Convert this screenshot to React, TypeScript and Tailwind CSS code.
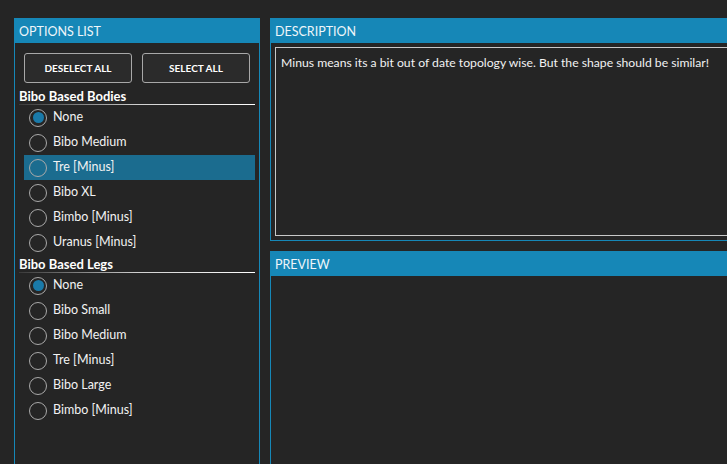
const font = { fontFamily: 'Lato, "Noto Sans", sans-serif' };

const bodies = ["None", "Bibo Medium", "Tre [Minus]", "Bibo XL", "Bimbo [Minus]", "Uranus [Minus]"];
const legs = ["None", "Bibo Small", "Bibo Medium", "Tre [Minus]", "Bibo Large", "Bimbo [Minus]"];

function Radio({ label, checked, highlight }: { label: string; checked?: boolean; highlight?: boolean }) {
    return (
        <div className={`flex items-center h-[25px] ml-[5px] pl-[5px] gap-[6px] ${highlight ? "bg-[#1b6c8f]" : ""}`}>
            <div className="w-[18px] h-[18px] rounded-full border-[1.5px] border-[#a9a9a9] flex items-center justify-center">
                {checked && <div className="w-[11px] h-[11px] rounded-full bg-[#1a7aa9]"></div>}
            </div>
            <span className="text-[12.5px] text-[#f2f2f2] leading-none">{label}</span>
        </div>
    );
}

function GroupHeader({ title }: { title: string }) {
    return (
        <div className="mr-[4px]">
            <div className="h-[17px] text-[13px] font-bold text-white leading-[18px]">{title}</div>
            <div className="h-px bg-gradient-to-r from-[#3a3a3a] via-[#cfcfcf] to-white"></div>
        </div>
    );
}

function PanelHeader({ title }: { title: string }) {
    return (
        <div className="h-[25px] shrink-0 bg-[#1687b7] flex items-center px-[4px] pt-[3px] text-[12.5px] text-[#eef6fa] leading-none">
            {title}
        </div>
    );
}

export default function App() {
    return (
        <div className="w-[727px] h-[464px] overflow-hidden bg-[#252525] flex gap-[10px] pt-[18px] pl-[14px]" style={font}>
            {/* Options list */}
            <div className="w-[246px] h-[470px] shrink-0 flex flex-col border border-t-0 border-[#1687b7]">
                <PanelHeader title="OPTIONS LIST" />
                <div className="pl-[4px] pt-[10px]">
                    <div className="flex gap-[10px] pl-[5px]">
                        <button className="w-[108px] h-[30px] rounded-[3px] border border-[#a8a8a8] bg-[#2b2b2b] text-[10px] font-bold text-white">
                            DESELECT ALL
                        </button>
                        <button className="w-[108px] h-[30px] rounded-[3px] border border-[#a8a8a8] bg-[#2b2b2b] text-[10px] font-bold text-white">
                            SELECT ALL
                        </button>
                    </div>
                    <div className="mt-[4px]">
                        <GroupHeader title="Bibo Based Bodies" />
                        <div className="mr-[4px]">
                            {bodies.map((b, i) => (
                                <Radio key={b} label={b} checked={i === 0} highlight={i === 2} />
                            ))}
                        </div>
                        <GroupHeader title="Bibo Based Legs" />
                        <div className="mr-[4px]">
                            {legs.map((b, i) => (
                                <Radio key={b} label={b} checked={i === 0} />
                            ))}
                        </div>
                    </div>
                </div>
            </div>

            {/* Right column */}
            <div className="w-[480px] shrink-0 flex flex-col gap-[10px]">
                <div className="h-[223px] shrink-0 flex flex-col border border-t-0 border-[#1687b7]">
                    <PanelHeader title="DESCRIPTION" />
                    <div className="flex-1 p-[4px]">
                        <div className="h-full border border-[#c8c8c8] px-[5px] pt-[7px] text-[12.2px] text-[#f2f2f2] leading-[16px]">
                            Minus means its a bit out of date topology wise. But the shape should be similar!
                        </div>
                    </div>
                </div>
                <div className="h-[230px] shrink-0 flex flex-col border border-t-0 border-[#1687b7]">
                    <PanelHeader title="PREVIEW" />
                    <div className="flex-1"></div>
                </div>
            </div>
        </div>
    );
}
